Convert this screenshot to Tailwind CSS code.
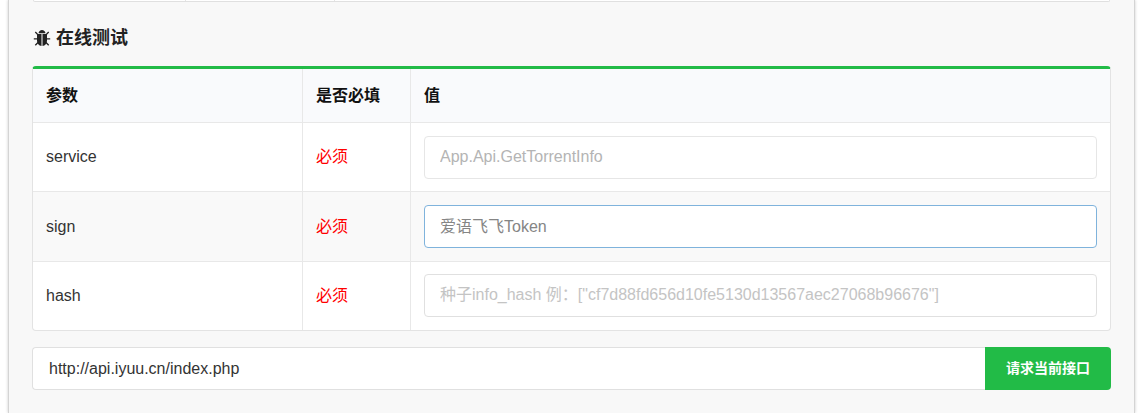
<!DOCTYPE html>
<html lang="zh-CN">
<head>
    <meta charset="UTF-8">
    <title>在线测试</title>
    <script src="https://cdn.jsdelivr.net/npm/@tailwindcss/browser@4"></script>
</head>
<body class="bg-white h-[413px] overflow-hidden font-['Liberation_Sans','Noto_Sans_CJK_SC',sans-serif]">
    <div class="ml-[8px] mr-[12px] h-[413px] bg-[#f8f8f8] border-x border-[#d4d4d4] shadow-[0_0_3px_rgba(0,0,0,0.2)] px-[23px]">
        <!-- end of the previous table -->
        <div class="h-[2px] mx-px flex border-b border-x border-[#e0e0e0] rounded-b bg-white">
            <div class="w-[152px] border-r border-[#e5e5e5]"></div>
            <div class="w-[149px] border-r border-[#e5e5e5]"></div>
        </div>

        <h3 class="mt-[26px] ml-px flex items-center gap-[5px] h-[20px] text-[18px] leading-[20px] font-bold text-[#222]">
            <svg class="w-[18px] h-[18px] shrink-0" viewBox="0 0 18 18" fill="#222">
                <path d="M5.500 4.300C5.700 2.200 7.200 .9 9 .9s3.300 1.300 3.500 3.400z"/>
                <path d="M4 5h4.500v12C5.800 16.700 4 14.500 4 11.800z"/>
                <path d="M9.500 5H14v6.800c0 2.700-1.800 4.900-4.500 5.200z"/>
                <path d="M4.500 5.200 2.300 3M13.500 5.200 15.700 3M4.500 9.800H.8M13.500 9.800h3.700M5 13.500l-2.700 2.700M13 13.500l2.700 2.700" stroke="#222" stroke-width="1.300" fill="none"/>
            </svg>
            在线测试
        </h3>

        <table class="mt-[18px] w-[1079px] table-fixed border-separate border-spacing-0 bg-white text-[16px] text-[#333] rounded-[4px] border-x border-b border-t-[3px] border-[#e3e3e3] border-t-[#22bb47]">
            <colgroup>
                <col class="w-[269px]">
                <col class="w-[108px]">
                <col>
            </colgroup>
            <thead>
                <tr class="h-[53px] bg-[#f9fafc] text-left text-[#111]">
                    <th class="pl-[13px] font-bold">参数</th>
                    <th class="pl-[13px] font-bold border-l border-[#e8e8e8]">是否必填</th>
                    <th class="pl-[13px] font-bold border-l border-[#e8e8e8]">值</th>
                </tr>
            </thead>
            <tbody>
                <tr class="h-[69px]">
                    <td class="pl-[13px] border-t border-[#e8e8e8]">service</td>
                    <td class="pl-[13px] border-t border-l border-[#e8e8e8] text-[#ff0000]">必须</td>
                    <td class="pl-[13px] border-t border-l border-[#e8e8e8]">
                        <input class="block w-[673px] h-[43px] px-[15px] rounded-[4px] border border-[#e6e6e6] bg-white text-[16px] placeholder:text-[#b4b4b4]" placeholder="App.Api.GetTorrentInfo">
                    </td>
                </tr>
                <tr class="h-[70px] bg-[#f9f9f9]">
                    <td class="pl-[13px] border-t border-[#e8e8e8]">sign</td>
                    <td class="pl-[13px] border-t border-l border-[#e8e8e8] text-[#ff0000]">必须</td>
                    <td class="pl-[13px] border-t border-l border-[#e8e8e8]">
                        <input class="block w-[673px] h-[43px] px-[15px] rounded-[4px] border border-[#7fb3dc] bg-white text-[16px] placeholder:text-[#858585]" placeholder="爱语飞飞Token">
                    </td>
                </tr>
                <tr class="h-[69px]">
                    <td class="pl-[13px] border-t border-[#e8e8e8]">hash</td>
                    <td class="pl-[13px] border-t border-l border-[#e8e8e8] text-[#ff0000]">必须</td>
                    <td class="pl-[13px] pb-[2px] border-t border-l border-[#e8e8e8]">
                        <input class="block w-[673px] h-[43px] px-[15px] rounded-[4px] border border-[#e0e0e0] bg-white text-[16px] placeholder:text-[#c4c4c4]" placeholder="种子info_hash 例：[&quot;cf7d88fd656d10fe5130d13567aec27068b96676&quot;]">
                    </td>
                </tr>
            </tbody>
        </table>

        <div class="mt-[16px] flex w-[1079px] h-[43px]">
            <input class="flex-1 min-w-0 px-[16px] rounded-l-[4px] border border-r-0 border-[#e0e0e0] bg-white text-[16px] text-[#333]" value="http://api.iyuu.cn/index.php">
            <button class="w-[126px] rounded-r-[4px] bg-[#22bb47] text-white text-[14px] font-bold">请求当前接口</button>
        </div>
    </div>
</body>
</html>
